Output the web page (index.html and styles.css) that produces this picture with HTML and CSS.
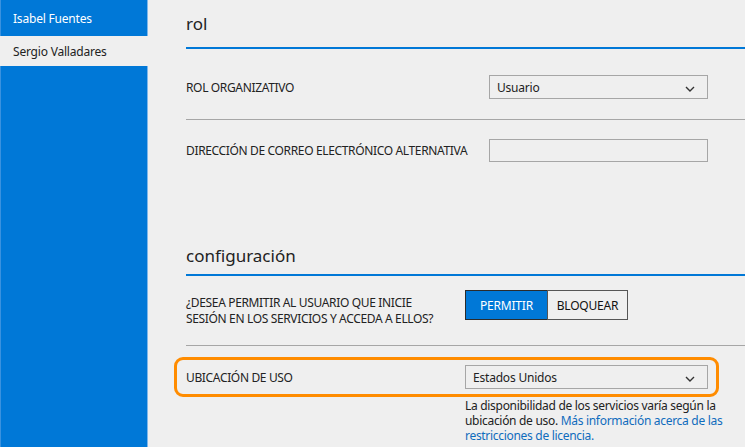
FILE: index.html
```html
<!DOCTYPE html>
<html lang="es">
<head>
<meta charset="utf-8">
<title>Usuario</title>
<link rel="stylesheet" href="styles.css">
</head>
<body>
<div class="app">
  <nav class="sidebar">
    <div class="user user-active">Isabel Fuentes</div>
    <div class="user">Sergio Valladares</div>
    <div class="sidebar-fill"></div>
  </nav>
  <main class="main">
    <section class="section">
      <h2 class="section-title title-rol">rol</h2>
      <div class="row row-role">
        <div class="label">ROL ORGANIZATIVO</div>
        <div class="select select-role">
          <span>Usuario</span>
          <svg class="chev" width="10" height="6" viewBox="0 0 10 6"><path d="M1 1l4 4 4-4" fill="none" stroke="#333" stroke-width="1.4"/></svg>
        </div>
      </div>
      <div class="row row-email">
        <div class="label">DIRECCIÓN DE CORREO ELECTRÓNICO ALTERNATIVA</div>
        <div class="input"></div>
      </div>
    </section>
    <section class="section">
      <h2 class="section-title title-config">configuración</h2>
      <div class="row row-signin">
        <div class="label label-two">¿DESEA PERMITIR AL USUARIO QUE INICIE<br>SESIÓN EN LOS SERVICIOS Y ACCEDA A ELLOS?</div>
        <div class="toggle">
          <span class="btn btn-on">PERMITIR</span><span class="btn btn-off">BLOQUEAR</span>
        </div>
      </div>
      <div class="usage">
        <div class="highlight">
          <div class="label">UBICACIÓN DE USO</div>
          <div class="select select-usage">
            <span>Estados Unidos</span>
            <svg class="chev" width="10" height="6" viewBox="0 0 10 6"><path d="M1 1l4 4 4-4" fill="none" stroke="#333" stroke-width="1.4"/></svg>
          </div>
        </div>
        <p class="help">La disponibilidad de los servicios varía según la ubicación de uso. <a href="#">Más información acerca de las restricciones de licencia.</a></p>
      </div>
    </section>
  </main>
</div>
</body>
</html>
```
FILE: styles.css
```css
html, body {
  margin: 0;
  padding: 0;
  background: #efefef;
}
body {
  font-family: "Noto Sans", "Open Sans", sans-serif;
  color: #222;
  width: 745px;
  height: 447px;
  overflow: hidden;
}
.app {
  display: flex;
  height: 447px;
}
.sidebar {
  width: 148px;
  display: flex;
  flex-direction: column;
  flex-shrink: 0;
}
.user {
  height: 30px;
  padding-left: 13px;
  display: flex;
  align-items: center;
  font-size: 12px;
  letter-spacing: -0.2px;
  color: #222;
}
.user-active {
  height: 36px;
  background: #0078d7;
  color: #fff;
  border-right: 1px solid #7fb7ea;
  border-left: 1px solid #3a92df;
  padding-left: 12px;
  box-sizing: border-box;
}
.sidebar-fill {
  flex: 1;
  background: #0078d7;
  border-right: 1px solid #7fb7ea;
  border-left: 1px solid #3a92df;
}
.main {
  flex: 1;
  padding-left: 38px;
}
.section-title {
  margin: 0;
  font-weight: 400;
  font-size: 17px;
  color: #222;
  border-bottom: 2px solid #0078d7;
  display: flex;
  align-items: center;
}
.title-rol {
  height: 49px;
  box-sizing: border-box;
  padding-bottom: 0;
}
.title-config {
  margin-top: 74px;
  height: 40px;
  box-sizing: border-box;
  padding-bottom: 0;
}
.row {
  display: grid;
  align-items: center;
}
.label {
  font-size: 12px;
  letter-spacing: -0.35px;
  color: #222;
}
.label-two {
  line-height: 16px;
  margin-top: 5px;
}
.row-role {
  grid-template-columns: 303px 219px;
  padding: 26px 0 20px;
  border-bottom: 1px solid #a6a6a6;
}
.row-email {
  grid-template-columns: 303px 219px;
  padding-top: 19px;
}
.select {
  height: 24px;
  box-sizing: border-box;
  border: 1px solid #a6a6a6;
  display: flex;
  align-items: center;
  justify-content: space-between;
  padding: 0 12px 0 7px;
  font-size: 12px;
  letter-spacing: -0.2px;
  color: #222;
}
.chev {
  margin-top: 3px;
}
.input {
  height: 23px;
  box-sizing: border-box;
  border: 1px solid #a6a6a6;
}
.row-signin {
  grid-template-columns: 279px auto;
  justify-content: start;
  align-items: start;
  padding: 14px 0 18px;
  border-bottom: 1px solid #a6a6a6;
}
.toggle {
  display: flex;
  height: 30px;
}
.btn {
  display: flex;
  align-items: center;
  justify-content: center;
  box-sizing: border-box;
  height: 30px;
  font-size: 12px;
  letter-spacing: -0.2px;
}
.btn-on {
  width: 82px;
  background: #0078d7;
  color: #fff;
  border: 1px solid #2b2b2b;
  border-right: none;
}
.btn-off {
  width: 81px;
  color: #111;
  border: 1px solid #555;
}
.usage {
  padding-top: 11px;
}
.highlight {
  margin-left: -12px;
  width: 545px;
  box-sizing: border-box;
  border: 3px solid #ff8c00;
  border-radius: 9px;
  padding: 5px 8px 5px 9px;
  display: grid;
  grid-template-columns: 279px 243px;
  align-items: center;
}
.help {
  margin: 1px 0 0 279px;
  width: 262px;
  font-size: 12px;
  line-height: 15px;
  letter-spacing: -0.3px;
  color: #222;
}
.help a {
  color: #0f6cbd;
  text-decoration: none;
}
```
